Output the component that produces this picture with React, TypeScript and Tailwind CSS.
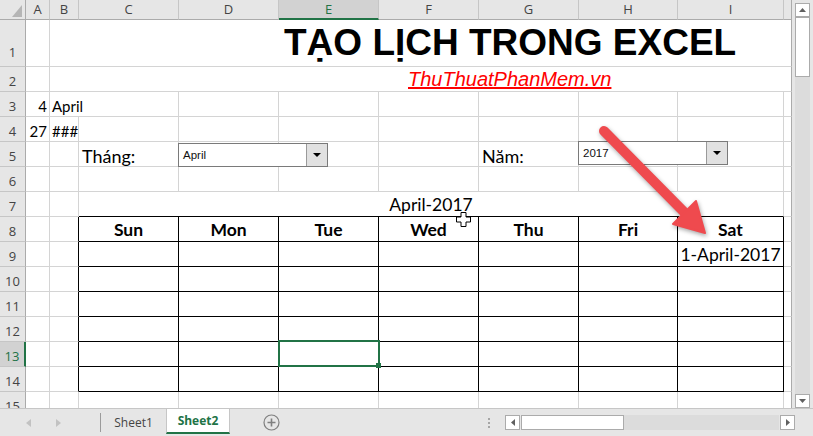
import React from "react";

const R: Record<string, string> = {
  g: "border-r border-r-[#d4d4d4]",
  k: "border-r border-r-black",
  h: "border-r border-r-[#c6c6c6]",
  d: "border-r border-r-[#ababab]",
  s: "border-r-2 border-r-[#217346]",
  n: "",
};

const B: Record<string, string> = {
  g: "border-b border-b-[#d4d4d4]",
  k: "border-b border-b-black",
  h: "border-b border-b-[#c6c6c6]",
  d: "border-b border-b-[#ababab]",
  s: "border-b-2 border-b-[#217346]",
  n: "",
};

const SPAN: Record<number, string> = {
  1: "",
  2: "col-span-2",
  7: "col-span-7",
  9: "col-span-9",
};

type CellProps = {
  span?: number;
  r?: string;
  b?: string;
  className?: string;
  children?: React.ReactNode;
};

function Cell({ span = 1, r = "g", b = "g", className = "", children }: CellProps) {
  return (
    <div className={`relative min-w-0 bg-white ${SPAN[span]} ${R[r]} ${B[b]} ${className}`}>
      {children}
    </div>
  );
}

function RowHead({ n, sel = false, pad = "pb-[3px]" }: { n: number; sel?: boolean; pad?: string }) {
  return (
    <div
      className={`flex items-end justify-center leading-none text-[13px] font-['Open_Sans',sans-serif] ${pad} ${B.h} ${
        sel ? `bg-[#d2d2d2] text-[#217346] ${R.s}` : `bg-[#e6e6e6] text-[#444] ${R.d}`
      }`}
    >
      {n}
    </div>
  );
}

function ColHead({ label, sel = false, last = false }: { label: string; sel?: boolean; last?: boolean }) {
  return (
    <div
      className={`flex items-center justify-center leading-none text-[13px] font-['Open_Sans',sans-serif] ${
        last ? R.d : R.h
      } ${sel ? `bg-[#d2d2d2] text-[#217346] ${B.s}` : `bg-[#e6e6e6] text-[#444] ${B.d}`}`}
    >
      {label}
    </div>
  );
}

function Dropdown({ text, className }: { text: string; className: string }) {
  return (
    <div
      className={`absolute z-10 left-[-1px] w-[150px] h-[24px] flex bg-white border border-[#7a7a7a] ${className}`}
    >
      <div className="flex-1 flex items-center pl-[4px] pt-[2px] text-[11.5px] text-[#111] font-['Liberation_Sans',sans-serif]">
        {text}
      </div>
      <div className="w-[21px] flex items-center justify-center bg-[#e1e1e1] border-l border-l-[#9a9a9a]">
        <svg width="8" height="4" viewBox="0 0 8 4">
          <polygon points="0,0 8,0 4,4" fill="#000" />
        </svg>
      </div>
    </div>
  );
}

const DAYS = ["Sun", "Mon", "Tue", "Wed", "Thu", "Fri", "Sat"];
const COLS = ["A", "B", "C", "D", "E", "F", "G", "H", "I"];

function TableRow({ n }: { n: number }) {
  return (
    <>
      <RowHead n={n} sel={n === 13} />
      <Cell />
      <Cell r="k" />
      {DAYS.map((d, i) => (
        <Cell key={d} r="k" b="k" className="flex items-end justify-center pb-[3px] text-[17.5px] leading-none">
          {n === 9 && i === 6 ? "1-April-2017" : null}
          {n === 13 && i === 2 ? (
            <div className="absolute z-10 left-[-1px] right-[-2px] top-[-2px] bottom-[-1px] border-2 border-[#217346]">
              <div className="absolute right-[-3px] bottom-[-3px] w-[5px] h-[5px] bg-[#217346]" />
            </div>
          ) : null}
        </Cell>
      ))}
      <Cell r="d" />
    </>
  );
}

function Sheet() {
  return (
    <div className="relative w-[792px] h-[408px] overflow-hidden">
      <div className="grid grid-cols-[26px_24px_29px_100px_100px_100px_100px_100px_99px_106px_8px] grid-rows-[20px_47px_repeat(14,25px)] font-['Lato',sans-serif] text-black">
        {/* header row */}
        <div className={`flex items-end justify-end pr-[3px] pb-[2px] bg-[#e6e6e6] ${R.d} ${B.d}`}>
          <svg width="10" height="12" viewBox="0 0 10 12">
            <polygon points="10,0 10,12 0,12" fill="#b5b5b5" />
          </svg>
        </div>
        {COLS.map((c) => (
          <ColHead key={c} label={c} sel={c === "E"} />
        ))}
        <ColHead label="" last />

        {/* row 1 */}
        <RowHead n={1} pad="pb-[7px]" />
        <Cell />
        <Cell span={9} r="d" className="flex items-end pl-[234px] pb-[5px]">
          <span className="font-['Liberation_Sans',sans-serif] font-bold text-[37px] leading-none whitespace-nowrap">
            TẠO LỊCH TRONG EXCEL
          </span>
        </Cell>

        {/* row 2 */}
        <RowHead n={2} />
        <Cell />
        <Cell span={9} r="d" className="flex items-end pl-[358px] pb-[2px]">
          <span className="font-['Liberation_Sans',sans-serif] italic text-[20px] leading-none text-[#ff0000] underline whitespace-nowrap">
            ThuThuatPhanMem.vn
          </span>
        </Cell>

        {/* row 3 */}
        <RowHead n={3} />
        <Cell className="flex items-end justify-end pr-[2px] pb-[2px] text-[15px] leading-none">4</Cell>
        <Cell span={2} className="flex items-end pl-[2px] pb-[2px] text-[15px] leading-none">April</Cell>
        <Cell />
        <Cell />
        <Cell />
        <Cell />
        <Cell />
        <Cell />
        <Cell r="d" />

        {/* row 4 */}
        <RowHead n={4} />
        <Cell className="flex items-end justify-end pr-[2px] pb-[2px] text-[15px] leading-none">27</Cell>
        <Cell className="flex items-end pl-[2px] pb-[2px] text-[15px] leading-none">###</Cell>
        <Cell />
        <Cell />
        <Cell />
        <Cell />
        <Cell />
        <Cell />
        <Cell />
        <Cell r="d" />

        {/* row 5 */}
        <RowHead n={5} />
        <Cell />
        <Cell />
        <Cell className="flex items-end pl-[3px] pb-[1px] text-[18px] leading-none">Tháng:</Cell>
        <Cell>
          <Dropdown text="April" className="top-[1px]" />
        </Cell>
        <Cell />
        <Cell />
        <Cell className="flex items-end pl-[3px] pb-[1px] text-[18px] leading-none">Năm:</Cell>
        <Cell>
          <Dropdown text="2017" className="top-[-1px]" />
        </Cell>
        <Cell />
        <Cell r="d" />

        {/* row 6 */}
        <RowHead n={6} />
        <Cell />
        <Cell />
        <Cell />
        <Cell />
        <Cell />
        <Cell />
        <Cell />
        <Cell />
        <Cell />
        <Cell r="d" />

        {/* row 7 */}
        <RowHead n={7} />
        <Cell />
        <Cell />
        <Cell span={7} b="k" className="flex items-end justify-center pb-[3px] text-[17.5px] leading-none">
          April-2017
        </Cell>
        <Cell r="d" />

        {/* row 8: weekday header */}
        <RowHead n={8} />
        <Cell />
        <Cell r="k" />
        {DAYS.map((d) => (
          <Cell key={d} r="k" b="k" className="flex items-end justify-center pb-[3px] text-[17.5px] font-bold leading-none">
            {d}
          </Cell>
        ))}
        <Cell r="d" />

        {[9, 10, 11, 12, 13, 14].map((n) => (
          <TableRow key={n} n={n} />
        ))}

        {/* row 15, cut by the tab bar */}
        <RowHead n={15} />
        <Cell />
        <Cell />
        <Cell />
        <Cell />
        <Cell />
        <Cell />
        <Cell />
        <Cell />
        <Cell />
        <Cell r="d" />
      </div>

      {/* red callout arrow */}
      <svg
        className="absolute left-0 top-0 z-20 pointer-events-none drop-shadow-[1px_2px_2px_rgba(0,0,0,0.35)]"
        width="792"
        height="408"
        viewBox="0 0 792 408"
      >
        <line x1="604" y1="131" x2="686" y2="214" stroke="#ef4a4e" strokeWidth="10" strokeLinecap="round" />
        <polygon points="705,233 673,224 696,201" fill="#ef4a4e" stroke="#ef4a4e" strokeWidth="2" strokeLinejoin="round" />
      </svg>

      {/* cell cursor */}
      <svg className="absolute left-[456px] top-[212px] z-20 pointer-events-none" width="15" height="15" viewBox="0 0 15 15">
        <path d="M5 0.5H10V5H14.5V10H10V14.5H5V10H0.5V5H5Z" fill="#fff" stroke="#000" strokeWidth="1" />
      </svg>
    </div>
  );
}

function VScroll() {
  return (
    <div className="w-[21px] h-[408px] bg-[#e6e6e6] flex flex-col items-center pt-[3px]">
      <div className="w-[15px] h-[14px] bg-white border border-[#ababab] flex items-center justify-center">
        <svg width="7" height="4" viewBox="0 0 7 4">
          <polygon points="0,4 7,4 3.5,0" fill="#606060" />
        </svg>
      </div>
      <div className="w-[15px] h-[60px] bg-white border border-[#ababab]" />
      <div className="w-[15px] flex-1 bg-[#dcdcdc]" />
      <div className="w-[15px] h-[14px] bg-white border border-[#ababab] flex items-center justify-center">
        <svg width="7" height="4" viewBox="0 0 7 4">
          <polygon points="0,0 7,0 3.5,4" fill="#606060" />
        </svg>
      </div>
    </div>
  );
}

function TabBar() {
  return (
    <div className="h-[28px] w-[813px] flex items-center bg-[#e6e6e6] border-t border-t-[#c6c6c6] font-['Open_Sans',sans-serif]">
      <div className="w-[100px] flex items-center">
        <svg className="ml-[26px]" width="5" height="8" viewBox="0 0 5 8">
          <polygon points="5,0 5,8 0,4" fill="#c2c2c2" />
        </svg>
        <svg className="ml-[25px]" width="5" height="8" viewBox="0 0 5 8">
          <polygon points="0,0 0,8 5,4" fill="#c2c2c2" />
        </svg>
      </div>
      <div className="w-px h-[19px] bg-[#9b9b9b]" />
      <div className="w-[65px] flex justify-center text-[12px] text-[#444]">Sheet1</div>
      <div className="w-[64px] h-[25px] self-start flex items-center justify-center bg-white border-x border-x-[#c6c6c6] border-b-2 border-b-[#217346] text-[12px] font-bold text-[#217346]">
        Sheet2
      </div>
      <svg className="ml-[33px]" width="17" height="17" viewBox="0 0 17 17">
        <circle cx="8.5" cy="8.5" r="7.5" fill="none" stroke="#7f7f7f" strokeWidth="1.2" />
        <path d="M8.5 4.5V12.5M4.5 8.5H12.5" stroke="#7f7f7f" strokeWidth="1.6" />
      </svg>
      <div className="ml-[208px] w-[2px] flex flex-col gap-[2px]">
        <div className="h-[2px] bg-[#a6a6a6]" />
        <div className="h-[2px] bg-[#a6a6a6]" />
        <div className="h-[2px] bg-[#a6a6a6]" />
      </div>
      <div className="ml-[15px] w-[15px] h-[15px] bg-white border border-[#ababab] flex items-center justify-center">
        <svg width="4" height="7" viewBox="0 0 4 7">
          <polygon points="4,0 4,7 0,3.5" fill="#606060" />
        </svg>
      </div>
      <div className="w-[103px] h-[15px] ml-px bg-white border border-[#ababab]" />
      <div className="w-[155px] h-[15px] bg-[#dcdcdc]" />
      <div className="ml-px w-[15px] h-[15px] bg-white border border-[#ababab] flex items-center justify-center">
        <svg width="4" height="7" viewBox="0 0 4 7">
          <polygon points="0,0 0,7 4,3.5" fill="#606060" />
        </svg>
      </div>
    </div>
  );
}

export default function App() {
  return (
    <div className="w-[813px] h-[436px] overflow-hidden bg-white flex flex-col">
      <div className="flex">
        <Sheet />
        <VScroll />
      </div>
      <TabBar />
    </div>
  );
}
